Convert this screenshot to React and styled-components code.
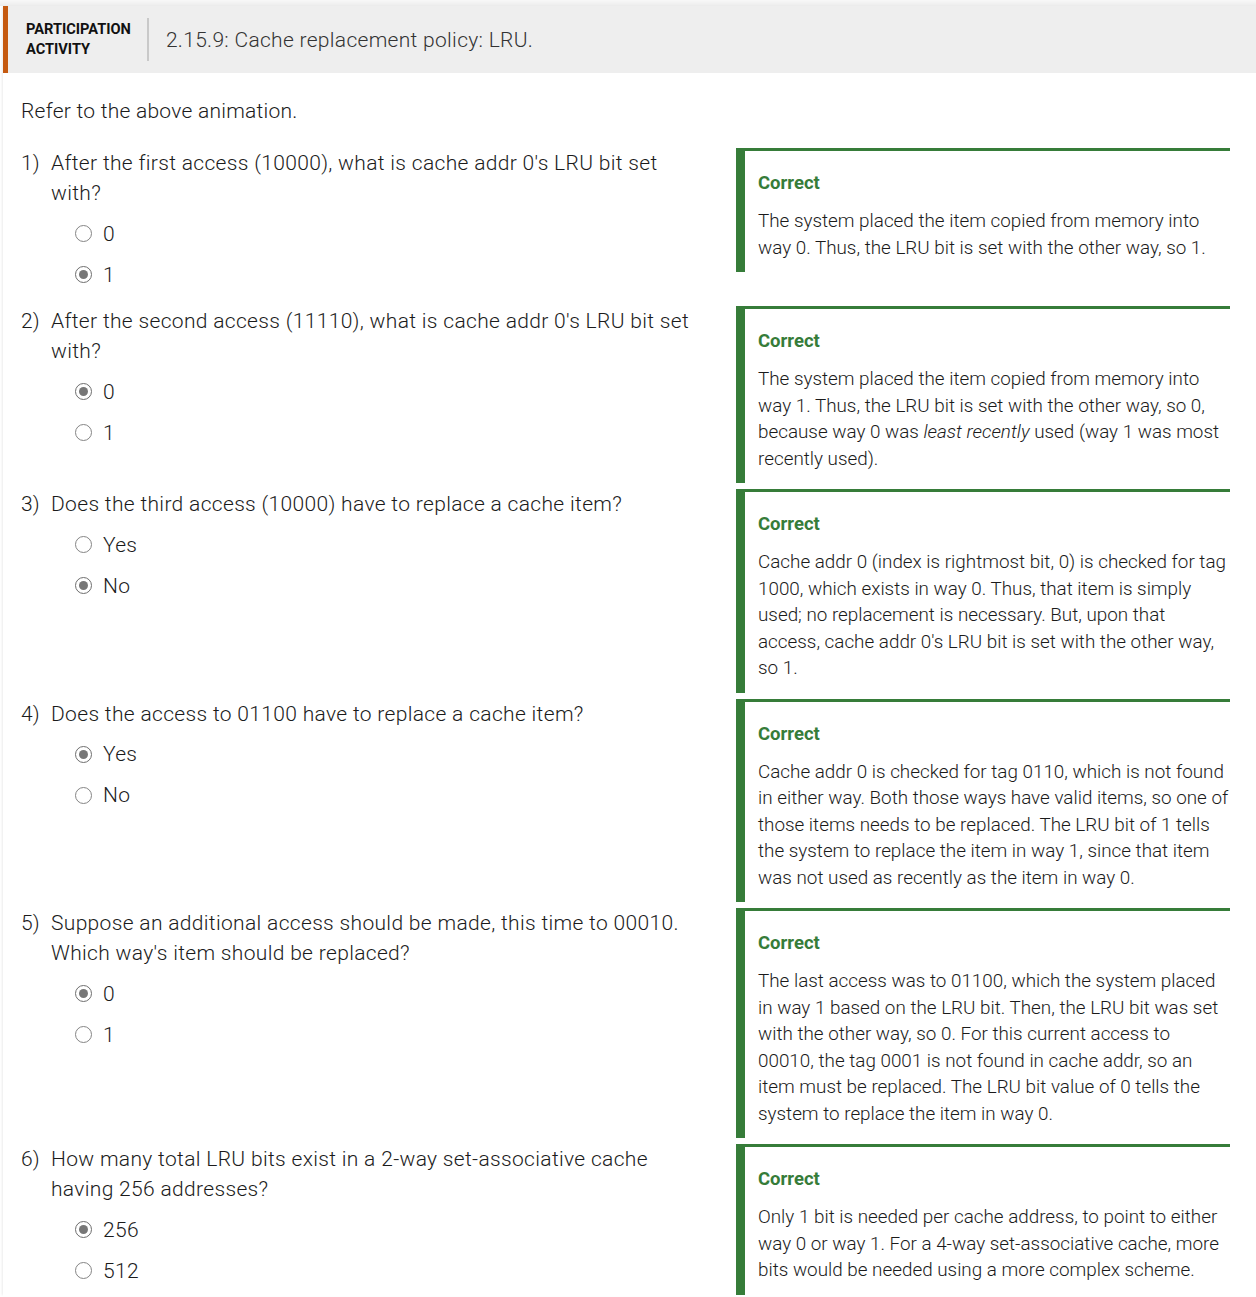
import React from "react";
import styled, { createGlobalStyle } from "styled-components";

const Global = createGlobalStyle`
  html, body { margin: 0; padding: 0; background: #fff; }
  body { font-family: Roboto, "Liberation Sans", Arial, sans-serif; color: #1b1b1b; }
  * { box-sizing: border-box; }
`;

const TopShade = styled.div`
  height: 6px;
  background: linear-gradient(#f8f8f8, #ececec);
`;

const Card = styled.div`
  margin-left: 3px;
  box-shadow: -2px 0 2px -1px rgba(0, 0, 0, 0.08);
`;

const Header = styled.div`
  display: flex;
  align-items: center;
  height: 67px;
  background: #eeeeee;
  border-left: 5px solid #c55a11;
  padding-left: 18px;
`;

const Label = styled.div`
  font-size: 14.6px;
  font-weight: 700;
  line-height: 20px;
  color: #111;
  text-transform: uppercase;
  padding-right: 16px;
  margin-top: -2px;
`;

const Divider = styled.div`
  width: 2px;
  height: 43px;
  background: #c9c9c9;
  margin-right: 17px;
`;

const Title = styled.div`
  font-size: 21px;
  font-weight: 300;
  letter-spacing: 0.3px;
  color: #333;
`;

const Content = styled.div`
  padding: 23px 26px 0 18px;
`;

const Intro = styled.p`
  margin: 0 0 22px;
  font-size: 21px;
  font-weight: 300;
  letter-spacing: 0.25px;
  line-height: 30px;
`;

const Row = styled.div`
  display: flex;
  align-items: flex-start;
  margin-bottom: 6px;
`;

const QuestionCol = styled.div`
  display: flex;
  width: 715px;
  flex-shrink: 0;
  padding-right: 33px;
  padding-bottom: 5px;
`;

const Num = styled.div`
  width: 30px;
  flex-shrink: 0;
  font-size: 21px;
  font-weight: 300;
  line-height: 30px;
`;

const QBody = styled.div`
  flex: 1;
`;

const QText = styled.div`
  font-size: 21px;
  font-weight: 300;
  letter-spacing: 0.33px;
  line-height: 30px;
`;

const Options = styled.div`
  margin: 5px 0 0 24px;
`;

const Option = styled.div`
  display: flex;
  align-items: center;
  height: 41px;
  font-size: 21px;
  font-weight: 300;
  letter-spacing: 0.3px;
`;

const Radio = styled.span`
  width: 17px;
  height: 17px;
  border-radius: 50%;
  border: 1px solid ${(p) => (p.$checked ? "#6e6e6e" : "#858585")};
  margin-right: 11px;
  display: inline-flex;
  align-items: center;
  justify-content: center;
  flex-shrink: 0;
  &::after {
    content: "";
    width: 9px;
    height: 9px;
    border-radius: 50%;
    background: ${(p) => (p.$checked ? "#777" : "transparent")};
  }
`;

const Feedback = styled.div`
  flex: 1;
  border-top: 3px solid #367c39;
  border-left: 9px solid #367c39;
  padding: 19px 0 11px 13px;
`;

const FHead = styled.div`
  color: #367c39;
  font-size: 18.5px;
  font-weight: 700;
  line-height: 26px;
  margin-bottom: 12px;
`;

const FBody = styled.div`
  font-size: 18.85px;
  font-weight: 300;
  line-height: 26.5px;
  color: #1b1b1b;
`;

const questions = [
  {
    q: "After the first access (10000), what is cache addr 0's LRU bit set with?",
    opts: ["0", "1"],
    sel: 1,
    fb: "The system placed the item copied from memory into way 0. Thus, the LRU bit is set with the other way, so 1.",
  },
  {
    q: "After the second access (11110), what is cache addr 0's LRU bit set with?",
    opts: ["0", "1"],
    sel: 0,
    fb: (
      <>
        The system placed the item copied from memory into way 1. Thus, the LRU bit is set with the other way, so 0,
        because way 0 was <em>least recently</em> used (way 1 was most recently used).
      </>
    ),
  },
  {
    q: "Does the third access (10000) have to replace a cache item?",
    opts: ["Yes", "No"],
    sel: 1,
    fb: "Cache addr 0 (index is rightmost bit, 0) is checked for tag 1000, which exists in way 0. Thus, that item is simply used; no replacement is necessary. But, upon that access, cache addr 0's LRU bit is set with the other way, so 1.",
  },
  {
    q: "Does the access to 01100 have to replace a cache item?",
    opts: ["Yes", "No"],
    sel: 0,
    fb: "Cache addr 0 is checked for tag 0110, which is not found in either way. Both those ways have valid items, so one of those items needs to be replaced. The LRU bit of 1 tells the system to replace the item in way 1, since that item was not used as recently as the item in way 0.",
  },
  {
    q: "Suppose an additional access should be made, this time to 00010. Which way's item should be replaced?",
    opts: ["0", "1"],
    sel: 0,
    fb: "The last access was to 01100, which the system placed in way 1 based on the LRU bit. Then, the LRU bit was set with the other way, so 0. For this current access to 00010, the tag 0001 is not found in cache addr, so an item must be replaced. The LRU bit value of 0 tells the system to replace the item in way 0.",
  },
  {
    q: "How many total LRU bits exist in a 2-way set-associative cache having 256 addresses?",
    opts: ["256", "512"],
    sel: 0,
    fb: "Only 1 bit is needed per cache address, to point to either way 0 or way 1. For a 4-way set-associative cache, more bits would be needed using a more complex scheme.",
  },
];

export default function App() {
  return (
    <>
      <Global />
      <TopShade />
      <Card>
        <Header>
          <Label>
            Participation
            <br />
            Activity
          </Label>
          <Divider />
          <Title>2.15.9: Cache replacement policy: LRU.</Title>
        </Header>
        <Content>
          <Intro>Refer to the above animation.</Intro>
          {questions.map((item, i) => (
            <Row key={i}>
              <QuestionCol>
                <Num>{i + 1})</Num>
                <QBody>
                  <QText>{item.q}</QText>
                  <Options>
                    {item.opts.map((o, j) => (
                      <Option key={j}>
                        <Radio $checked={j === item.sel} />
                        {o}
                      </Option>
                    ))}
                  </Options>
                </QBody>
              </QuestionCol>
              <Feedback>
                <FHead>Correct</FHead>
                <FBody>{item.fb}</FBody>
              </Feedback>
            </Row>
          ))}
        </Content>
      </Card>
    </>
  );
}
